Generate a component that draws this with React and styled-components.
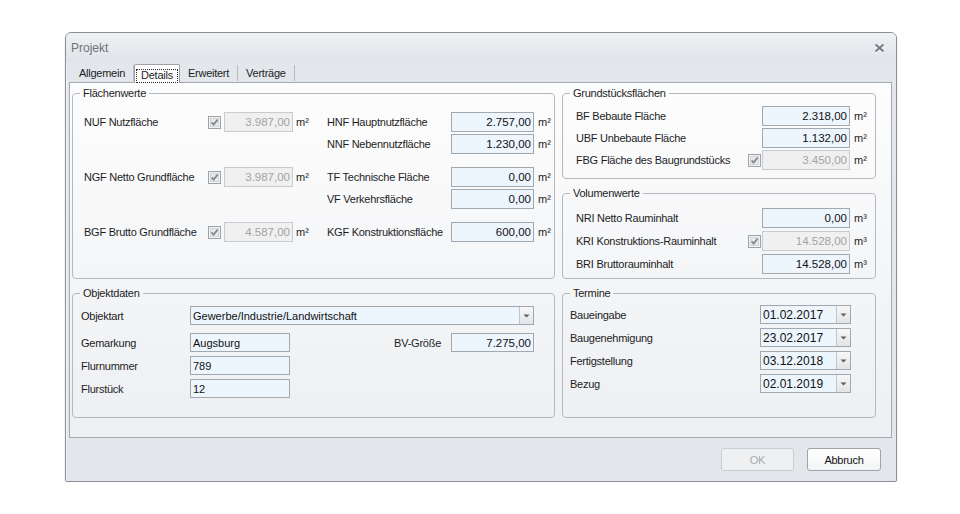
import React from "react";
import styled, { createGlobalStyle } from "styled-components";

const GlobalStyle = createGlobalStyle`
  html, body {
    margin: 0;
    padding: 0;
    background: #ffffff;
  }
  body {
    font-family: "Liberation Sans", Arial, sans-serif;
    font-size: 11px;
    color: #1d1d1f;
  }
`;

const Check = () => (
  <svg width="13" height="13" viewBox="0 0 13 13">
    <rect x="0.5" y="0.5" width="12" height="12" fill="#f2f3f4" stroke="#9ea2a7" />
    <rect x="2.5" y="2.5" width="8" height="8" fill="#e6e8ea" stroke="#d3d6d9" />
    <path d="M3.6 6.4 L5.6 8.6 L9.6 3.6" fill="none" stroke="#83878c" strokeWidth="1.7" />
  </svg>
);

const CloseIcon = () => (
  <svg width="11" height="10" viewBox="0 0 11 10">
    <path d="M1.5 1.5 L9.5 8.5 M9.5 1.5 L1.5 8.5" stroke="#ffffff" strokeWidth="2.6" opacity="0.7" transform="translate(0 0.8)" />
    <path d="M1.5 1.5 L9.5 8.5 M9.5 1.5 L1.5 8.5" stroke="#737c8a" strokeWidth="2" />
  </svg>
);

const Arrow = () => (
  <svg width="7" height="4" viewBox="0 0 7 4">
    <path d="M0.5 0.5 H6.5 L3.5 3.5 Z" fill="#5b5f64" />
  </svg>
);

const flaechen = [
  {
    left: { label: "NUF Nutzfläche", value: "3.987,00" },
    right: [
      { label: "HNF Hauptnutzfläche", value: "2.757,00" },
      { label: "NNF Nebennutzfläche", value: "1.230,00" },
    ],
  },
  {
    left: { label: "NGF Netto Grundfläche", value: "3.987,00" },
    right: [
      { label: "TF Technische Fläche", value: "0,00" },
      { label: "VF Verkehrsfläche", value: "0,00" },
    ],
  },
  {
    left: { label: "BGF Brutto Grundfläche", value: "4.587,00" },
    right: [{ label: "KGF Konstruktionsfläche", value: "600,00" }],
  },
];

const grund = [
  { label: "BF Bebaute Fläche", value: "2.318,00" },
  { label: "UBF Unbebaute Fläche", value: "1.132,00" },
  { label: "FBG Fläche des Baugrundstücks", value: "3.450,00", locked: true },
];

const volumen = [
  { label: "NRI Netto Rauminhalt", value: "0,00" },
  { label: "KRI Konstruktions-Rauminhalt", value: "14.528,00", locked: true },
  { label: "BRI Bruttorauminhalt", value: "14.528,00" },
];

const termine = [
  { label: "Baueingabe", value: "01.02.2017" },
  { label: "Baugenehmigung", value: "23.02.2017" },
  { label: "Fertigstellung", value: "03.12.2018" },
  { label: "Bezug", value: "02.01.2019" },
];

const tabs = ["Allgemein", "Details", "Erweitert", "Verträge"];

export default function App() {
  return (
    <>
      <GlobalStyle />
      <Page>
        <Window>
          <TitleBar>
            <Title>Projekt</Title>
            <CloseIcon />
          </TitleBar>
          <Body>
            <TabStrip>
              {tabs.map((t) =>
                t === "Details" ? (
                  <ActiveTab key={t}>
                    <FocusBox>{t}</FocusBox>
                  </ActiveTab>
                ) : (
                  <Tab key={t}>{t}</Tab>
                )
              )}
            </TabStrip>
            <Panel>
              <Group>
                <Legend>Flächenwerte</Legend>
                <FlaechenBody>
                  {flaechen.map((s) => (
                    <Section key={s.left.label}>
                      <Row>
                        <Label $w={124}>{s.left.label}</Label>
                        <CheckSlot $mr={3}>
                          <Check />
                        </CheckSlot>
                        <Field $w={69} disabled defaultValue={s.left.value} />
                        <Unit $w={34}>m²</Unit>
                      </Row>
                      <RightPart>
                        {s.right.map((r) => (
                          <Row key={r.label}>
                            <Label $w={124}>{r.label}</Label>
                            <Field $w={83} readOnly defaultValue={r.value} />
                            <Unit>m²</Unit>
                          </Row>
                        ))}
                      </RightPart>
                    </Section>
                  ))}
                </FlaechenBody>
              </Group>

              <RightStack>
                <Group>
                  <Legend>Grundstücksflächen</Legend>
                  <StackBody $top={6} $gap={2}>
                    {grund.map((r) => (
                      <Row key={r.label}>
                        <Label $w={172}>{r.label}</Label>
                        <CheckSlot $mr={1}>{r.locked && <Check />}</CheckSlot>
                        {r.locked ? (
                          <Field $w={88} disabled defaultValue={r.value} />
                        ) : (
                          <Field $w={88} readOnly defaultValue={r.value} />
                        )}
                        <Unit>m²</Unit>
                      </Row>
                    ))}
                  </StackBody>
                </Group>
                <Group>
                  <Legend>Volumenwerte</Legend>
                  <StackBody $top={8} $gap={3}>
                    {volumen.map((r) => (
                      <Row key={r.label}>
                        <Label $w={172}>{r.label}</Label>
                        <CheckSlot $mr={1}>{r.locked && <Check />}</CheckSlot>
                        {r.locked ? (
                          <Field $w={88} disabled defaultValue={r.value} />
                        ) : (
                          <Field $w={88} readOnly defaultValue={r.value} />
                        )}
                        <Unit>m³</Unit>
                      </Row>
                    ))}
                  </StackBody>
                </Group>
              </RightStack>

              <Group>
                <Legend>Objektdaten</Legend>
                <ObjektGrid>
                  <GridLabel>Objektart</GridLabel>
                  <Select>
                    <SelectText>Gewerbe/Industrie/Landwirtschaft</SelectText>
                    <DropButton>
                      <Arrow />
                    </DropButton>
                  </Select>
                  <GridLabel>Gemarkung</GridLabel>
                  <TextField readOnly defaultValue="Augsburg" />
                  <GridLabel $right>BV-Größe</GridLabel>
                  <TextField readOnly defaultValue="7.275,00" $num />
                  <GridLabel>Flurnummer</GridLabel>
                  <TextField readOnly defaultValue="789" />
                  <Spacer />
                  <GridLabel>Flurstück</GridLabel>
                  <TextField readOnly defaultValue="12" />
                </ObjektGrid>
              </Group>

              <Group>
                <Legend>Termine</Legend>
                <TermineGrid>
                  {termine.map((t) => (
                    <React.Fragment key={t.label}>
                      <GridLabel>{t.label}</GridLabel>
                      <DatePicker>
                        <DateText>{t.value}</DateText>
                        <DropButton>
                          <Arrow />
                        </DropButton>
                      </DatePicker>
                    </React.Fragment>
                  ))}
                </TermineGrid>
              </Group>
            </Panel>
            <Footer>
              <Button $w={73} disabled>
                OK
              </Button>
              <Button $w={74}>Abbruch</Button>
            </Footer>
          </Body>
        </Window>
      </Page>
    </>
  );
}

const Page = styled.div`
  padding: 32px 0 0 65px;
`;

const Window = styled.div`
  width: 832px;
  height: 450px;
  box-sizing: border-box;
  border: 1px solid #8c9096;
  border-radius: 6px 6px 2px 2px;
  background: #e3e6ea;
  box-shadow: 0 1px 2px rgba(0, 0, 0, 0.15);
  display: flex;
  flex-direction: column;
  overflow: hidden;
`;

const TitleBar = styled.div`
  height: 30px;
  flex-shrink: 0;
  display: flex;
  align-items: center;
  justify-content: space-between;
  padding: 0 11px 0 5px;
  background: linear-gradient(#eef0f3, #dfe3e8);
`;

const Title = styled.span`
  font-size: 12px;
  color: #6f7277;
`;

const Body = styled.div`
  flex: 1;
  display: flex;
  flex-direction: column;
  padding: 0 4px 0 2px;
  border-left: 1px solid #f4f5f7;
`;

const TabStrip = styled.div`
  height: 19px;
  display: flex;
  align-items: flex-end;
  padding-left: 2px;
  position: relative;
  z-index: 1;
`;

const Tab = styled.div`
  height: 16px;
  margin-bottom: 1px;
  display: flex;
  align-items: center;
  padding: 0 8px;
  border-right: 1px solid #b8bcc2;
  letter-spacing: -0.25px;
  white-space: nowrap;
`;

const ActiveTab = styled.div`
  height: 19px;
  box-sizing: border-box;
  margin-bottom: -1px;
  padding: 4px 1px 0;
  background: #ffffff;
  border: 1px solid #9ca1a8;
  border-bottom: none;
  border-radius: 2px 2px 0 0;
  display: flex;
  align-items: flex-start;
`;

const FocusBox = styled.div`
  border: 1px dotted #2b2b2b;
  padding: 0 4px 1px;
  line-height: 11px;
  letter-spacing: -0.25px;
  white-space: nowrap;
`;

const Panel = styled.div`
  width: 823px;
  height: 356px;
  box-sizing: border-box;
  border: 1px solid #a5aab1;
  background: linear-gradient(#fdfdfd, #edeff2);
  padding: 4px 15px 19px 2px;
  display: grid;
  grid-template-columns: 483px 314px;
  grid-template-rows: 192px 131px;
  column-gap: 7px;
  row-gap: 8px;
`;

const Group = styled.fieldset`
  margin: 0;
  padding: 0;
  min-width: 0;
  box-sizing: border-box;
  border: 1px solid #b4b9c0;
  border-radius: 4px;
  height: 100%;
`;

const Legend = styled.legend`
  margin-left: 7px;
  padding: 0 3px;
  line-height: 13px;
  font-size: 11px;
  letter-spacing: -0.25px;
`;

const RightStack = styled.div`
  display: flex;
  flex-direction: column;
  gap: 8px;

  & > fieldset {
    flex: 1;
    height: auto;
  }
`;

const FlaechenBody = styled.div`
  padding: 12px 0 0 11px;
  display: flex;
  flex-direction: column;
  gap: 13px;
`;

const Section = styled.div`
  display: flex;
  align-items: flex-start;
`;

const RightPart = styled.div`
  display: flex;
  flex-direction: column;
  gap: 2px;
`;

const StackBody = styled.div`
  padding: ${(p) => p.$top}px 0 0 13px;
  display: flex;
  flex-direction: column;
  gap: ${(p) => p.$gap}px;
`;

const Row = styled.div`
  display: flex;
  align-items: center;
  height: 20px;
`;

const Label = styled.span`
  width: ${(p) => p.$w}px;
  flex-shrink: 0;
  letter-spacing: -0.25px;
  white-space: nowrap;
`;

const CheckSlot = styled.span`
  width: 13px;
  height: 13px;
  margin-right: ${(p) => p.$mr}px;
  flex-shrink: 0;
  display: flex;
`;

const Field = styled.input`
  width: ${(p) => p.$w}px;
  height: 20px;
  box-sizing: border-box;
  margin: 0;
  padding: 0 2px 0 3px;
  border: 1px solid ${(p) => (p.disabled ? "#c8cbcf" : "#a2a8b0")};
  background: ${(p) => (p.disabled ? "#f0f0f0" : "#edf5fd")};
  color: ${(p) => (p.disabled ? "#a3a3a3" : "#111111")};
  font-family: "Liberation Sans", Arial, sans-serif;
  font-size: 11.5px;
  text-align: right;
  outline: none;
  flex-shrink: 0;
`;

const Unit = styled.span`
  width: ${(p) => (p.$w ? `${p.$w}px` : "auto")};
  box-sizing: border-box;
  padding-left: ${(p) => (p.$w ? 3 : 4)}px;
  flex-shrink: 0;
  font-size: 11px;
`;

const ObjektGrid = styled.div`
  padding: 6px 20px 0 8px;
  display: grid;
  grid-template-columns: 109px 100px 1fr 83px;
  grid-template-rows: 23px 19px 19px 19px;
  row-gap: 4px;

  & > :nth-child(-n + 2) {
    margin-bottom: 4px;
  }
`;

const GridLabel = styled.span`
  display: flex;
  align-items: center;
  justify-content: ${(p) => (p.$right ? "flex-end" : "flex-start")};
  padding-right: ${(p) => (p.$right ? 10 : 0)}px;
  letter-spacing: -0.25px;
  white-space: nowrap;
`;

const Spacer = styled.span`
  grid-column: 3 / 5;
`;

const TextField = styled.input`
  height: 19px;
  box-sizing: border-box;
  margin: 0;
  width: 100%;
  padding: ${(p) => (p.$num ? "0 2px 0 3px" : "0 2px")};
  border: 1px solid #a2a8b0;
  background: #edf5fd;
  color: #111111;
  font-family: "Liberation Sans", Arial, sans-serif;
  font-size: ${(p) => (p.$num ? 11.5 : 11)}px;
  text-align: ${(p) => (p.$num ? "right" : "left")};
  outline: none;
`;

const Select = styled.div`
  grid-column: 2 / 5;
  height: 19px;
  box-sizing: border-box;
  border: 1px solid #a2a8b0;
  background: #edf5fd;
  display: flex;
`;

const SelectText = styled.span`
  flex: 1;
  display: flex;
  align-items: center;
  padding-left: 2px;
  font-size: 11px;
  color: #111111;
`;

const DropButton = styled.span`
  width: 13px;
  flex-shrink: 0;
  border-left: 1px solid #c2c6cb;
  background: linear-gradient(#f6f7f8, #e2e4e7);
  display: flex;
  align-items: center;
  justify-content: center;
`;

const TermineGrid = styled.div`
  padding: 5px 0 0 7px;
  display: grid;
  grid-template-columns: 190px 91px;
  grid-auto-rows: 19px;
  row-gap: 4px;
`;

const DatePicker = styled.div`
  height: 19px;
  box-sizing: border-box;
  border: 1px solid #a2a8b0;
  background: #edf5fd;
  display: flex;
`;

const DateText = styled.span`
  flex: 1;
  display: flex;
  align-items: center;
  padding-left: 2px;
  font-size: 12px;
  color: #111111;
`;

const Footer = styled.div`
  display: flex;
  justify-content: flex-end;
  align-items: flex-start;
  gap: 13px;
  padding: 10px 11px 0 0;
`;

const Button = styled.button`
  width: ${(p) => p.$w}px;
  height: 23px;
  margin: 0;
  padding: 0;
  box-sizing: border-box;
  border-radius: 3px;
  border: 1px solid ${(p) => (p.disabled ? "#c9ccd0" : "#9da3aa")};
  background: ${(p) =>
    p.disabled ? "#eff0f2" : "linear-gradient(#ffffff, #f3f4f6)"};
  color: ${(p) => (p.disabled ? "#a7a9ac" : "#111111")};
  font-family: "Liberation Sans", Arial, sans-serif;
  font-size: 11px;
  letter-spacing: -0.25px;
`;
